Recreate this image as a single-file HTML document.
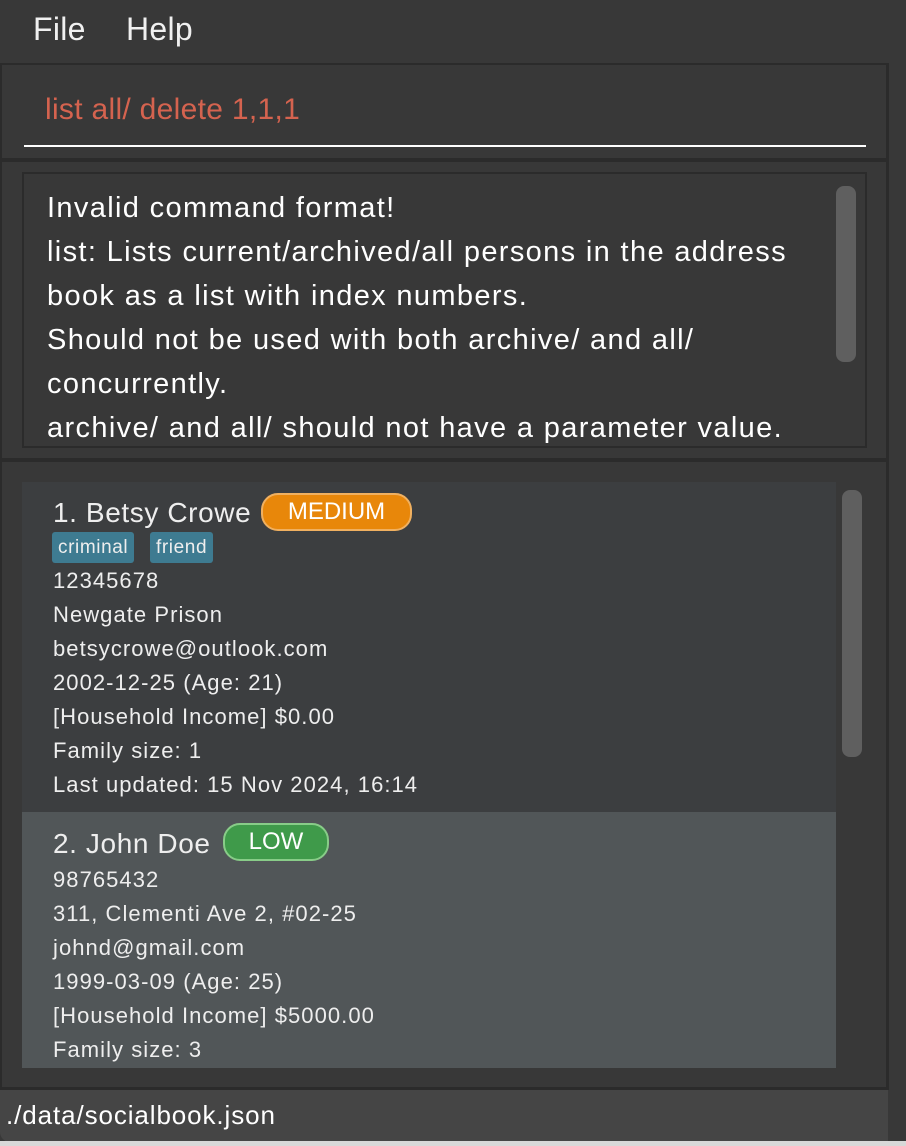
<!DOCTYPE html>
<html><head><meta charset="utf-8"><style>
*{margin:0;padding:0;box-sizing:border-box}
body{width:906px;height:1146px;background:#383838;position:relative;overflow:hidden;font-family:"Liberation Sans",sans-serif;color:#fff}
.a{position:absolute;white-space:nowrap}
.menu{font-size:32px;color:#f0f0f0;top:11px;letter-spacing:0.3px}
.line{position:absolute;background:#2b2b2b}
.res{font-size:29px;line-height:44px;left:47px;top:186px;position:absolute;letter-spacing:1.35px;white-space:nowrap}
.card{position:absolute;left:22px;width:814px}
.t{position:absolute;left:31px;font-size:22px;color:#eee;white-space:nowrap;letter-spacing:1.05px}
.name{font-size:28px;left:31px;letter-spacing:0.6px}
.pill{position:absolute;border-radius:17px;font-size:24px;text-align:center;line-height:34px;color:#fff}
.tag{position:absolute;background:#3e7b91;border-radius:3px;font-size:19px;line-height:31px;padding:0 6px;color:#eee;letter-spacing:0.6px}
</style></head><body>
<div class="a menu" style="left:33px">File</div>
<div class="a menu" style="left:126px">Help</div>
<div class="line" style="left:0;top:63px;width:888px;height:2px"></div>
<div class="line" style="left:886px;top:63px;width:3px;height:1027px"></div>
<div class="line" style="left:0;top:63px;width:2px;height:1027px"></div>
<div class="a" style="left:45px;top:93px;font-size:30px;color:#d5634f;letter-spacing:0.3px">list all/ delete 1,1,1</div>
<div style="position:absolute;left:24px;top:145px;width:842px;height:2px;background:#fff"></div>
<div class="line" style="left:0;top:158px;width:888px;height:4px"></div>
<div style="position:absolute;left:22px;top:172px;width:845px;height:276px;border:2px solid #2b2b2b"></div>
<div class="res">Invalid command format!<br>list: Lists current/archived/all persons in the address<br>book as a list with index numbers.<br>Should not be used with both archive/ and all/<br>concurrently.<br>archive/ and all/ should not have a parameter value.</div>
<div style="position:absolute;left:836px;top:186px;width:20px;height:176px;background:#5f5f5f;border-radius:8px"></div>
<div class="line" style="left:0;top:458px;width:888px;height:4px"></div>

<div class="card" style="top:482px;height:330px;background:#3c3e40">
<div class="t name" style="top:15px">1. Betsy Crowe</div>
<div class="pill" style="left:239px;top:11px;width:151px;background:#e8870a;border:2px solid #f0b060">MEDIUM</div>
<div class="tag" style="left:30px;top:50px">criminal</div>
<div class="tag" style="left:128px;top:50px">friend</div>
<div class="t" style="top:86px">12345678</div>
<div class="t" style="top:120px">Newgate Prison</div>
<div class="t" style="top:154px">betsycrowe@outlook.com</div>
<div class="t" style="top:188px">2002-12-25 (Age: 21)</div>
<div class="t" style="top:222px">[Household Income] $0.00</div>
<div class="t" style="top:256px">Family size: 1</div>
<div class="t" style="top:290px">Last updated: 15 Nov 2024, 16:14</div>
</div>
<div class="card" style="top:812px;height:256px;background:#515658">
<div class="t name" style="top:16px">2. John Doe</div>
<div class="pill" style="left:201px;top:11px;width:106px;background:#3f9a4a;border:2px solid #88cc88">LOW</div>
<div class="t" style="top:55px">98765432</div>
<div class="t" style="top:89px">311, Clementi Ave 2, #02-25</div>
<div class="t" style="top:123px">johnd@gmail.com</div>
<div class="t" style="top:157px">1999-03-09 (Age: 25)</div>
<div class="t" style="top:191px">[Household Income] $5000.00</div>
<div class="t" style="top:225px">Family size: 3</div>
</div>
<div style="position:absolute;left:842px;top:490px;width:20px;height:267px;background:#5f5f5f;border-radius:8px"></div>
<div class="line" style="left:0;top:1087px;width:888px;height:3px"></div>
<div style="position:absolute;left:0;top:1090px;width:888px;height:52px;background:#454545;border-bottom-left-radius:10px"></div>
<div class="a" style="left:6px;top:1100px;font-size:26px;color:#fff;letter-spacing:0.9px">./data/socialbook.json</div>
<div style="position:absolute;left:0;top:1141px;width:906px;height:5px;background:#d8d8d8"></div>
</body></html>
